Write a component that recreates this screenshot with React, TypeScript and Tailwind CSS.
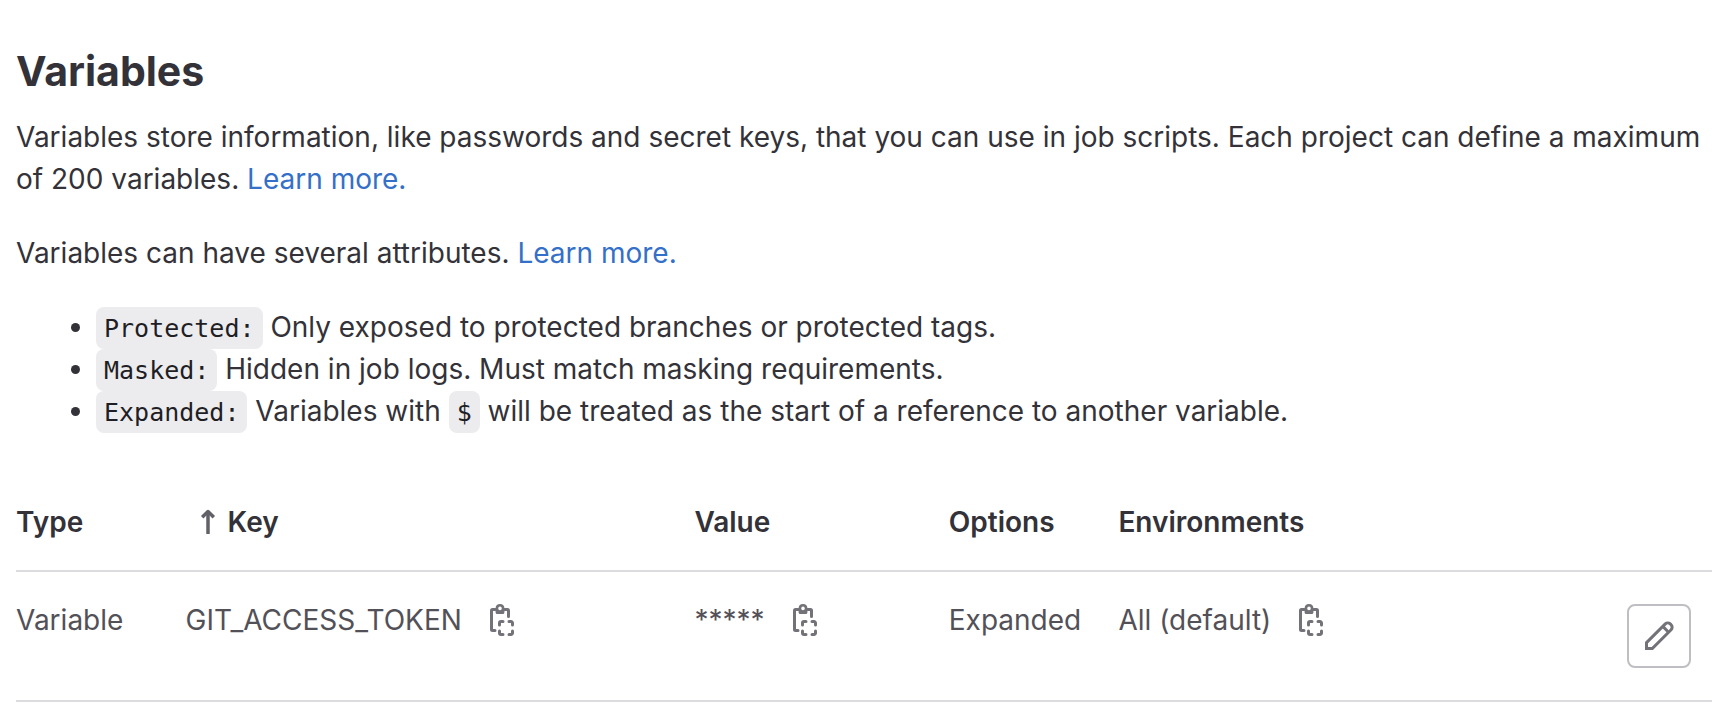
import type { ReactNode } from 'react';

function ClipboardIcon() {
  return (
    <svg viewBox="0 0 16 16" className="size-8 fill-none stroke-current" strokeWidth="1.5" strokeLinecap="round" aria-hidden="true">
      <path d="M4.5 13.25H3.25a.5.5 0 0 1-.5-.5V3.25a.5.5 0 0 1 .5-.5h1.5M9.25 2.75h1.5a.5.5 0 0 1 .5.5v3" />
      <path
        className="fill-current"
        stroke="none"
        fillRule="evenodd"
        d="M7 0a2.2 2.2 0 0 0-2.2 2v2.25c0 .41.34.75.75.75h2.9c.41 0 .75-.34.75-.75V2A2.2 2.2 0 0 0 7 0Zm0 1.3a.9.9 0 1 1 0 1.8.9.9 0 0 1 0-1.8Z"
      />
      <path d="M6.75 10.5v-1a.75.75 0 0 1 .75-.75h1M11.5 8.75h1a.75.75 0 0 1 .75.75v1M13.25 13.5v1a.75.75 0 0 1-.75.75h-1M8.5 15.25h-1a.75.75 0 0 1-.75-.75v-1" />
    </svg>
  );
}

function PencilIcon() {
  return (
    <svg viewBox="0 0 16 16" className="size-8 fill-none stroke-current" strokeWidth="1.5" aria-hidden="true">
      <path d="M1.75 14.25v-2.9l9.4-9.4a1.75 1.75 0 0 1 2.47 0l.43.43a1.75 1.75 0 0 1 0 2.47l-9.4 9.4Z" />
      <path d="m9.9 3.2 2.9 2.9" />
    </svg>
  );
}

function SortAscendingIcon() {
  return (
    <svg viewBox="0 0 16 42" className="h-[42px] w-4 fill-none stroke-current" strokeWidth="3.5" aria-hidden="true">
      <path d="M8 33V11" />
      <path d="m2.2 16.2 5.8-5.7 5.8 5.7" strokeLinejoin="round" />
    </svg>
  );
}

function Code({ children }: { children: ReactNode }) {
  return (
    <code className="rounded-lg bg-[#ececef] px-2 pt-[7px] pb-1.5 font-['DejaVu_Sans_Mono',monospace] text-[25px] leading-none text-[#1f1e24]">
      {children}
    </code>
  );
}

function LearnMore() {
  return (
    <a href="#learn-more" className="text-[#3470c8]">
      Learn more.
    </a>
  );
}

function Copyable({ label, children }: { label: string; children: ReactNode }) {
  return (
    <div className="flex items-start gap-6">
      <span>{children}</span>
      <button type="button" aria-label={label} className="text-[#737278]">
        <ClipboardIcon />
      </button>
    </div>
  );
}

export default function App() {
  return (
    <main className="bg-white pt-[45px] pr-2.5 pl-4 font-['Inter',sans-serif] text-[28px] leading-[42px] text-[#333238]">
      <h1 className="mb-[19px] text-[41px] leading-[52px] font-bold">Variables</h1>
      <p className="mb-8">
        Variables store information, like passwords and secret keys, that you can use in job scripts. Each project can
        define a maximum of 200 variables. <LearnMore />
      </p>
      <p className="mb-8">
        Variables can have several attributes. <LearnMore />
      </p>
      <ul className="mb-10 list-disc pl-20">
        <li>
          <Code>Protected:</Code> Only exposed to protected branches or protected tags.
        </li>
        <li>
          <Code>Masked:</Code> Hidden in job logs. Must match masking requirements.
        </li>
        <li>
          <Code>Expanded:</Code> Variables with <Code>$</Code> will be treated as the start of a reference to another
          variable.
        </li>
      </ul>
      <table className="w-full table-fixed text-left">
        <thead>
          <tr className="border-b-2 border-[#dcdcde] *:pt-[29px] *:pb-[27px] *:font-semibold">
            <th scope="col" className="w-[10%]">Type</th>
            <th scope="col" className="w-[30%]" aria-sort="ascending">
              <div className="flex gap-3 pl-3.5">
                <span className="text-[#626168]">
                  <SortAscendingIcon />
                </span>
                Key
              </div>
            </th>
            <th scope="col" className="w-[15%]">Value</th>
            <th scope="col" className="w-[10%]">Options</th>
            <th scope="col" className="w-[20%]">Environments</th>
            <th scope="col" className="w-[15%]" aria-label="Actions" />
          </tr>
        </thead>
        <tbody>
          <tr className="border-b-2 border-[#dcdcde] align-top leading-8 text-[#535158] *:py-8">
            <td>Variable</td>
            <td><Copyable label="Copy key">GIT_ACCESS_TOKEN</Copyable></td>
            <td><Copyable label="Copy value">*****</Copyable></td>
            <td>Expanded</td>
            <td><Copyable label="Copy environment">All (default)</Copyable></td>
            <td>
              <div className="flex justify-end pr-[21px]">
                <button
                  type="button"
                  aria-label="Edit"
                  className="flex size-16 items-center justify-center rounded-lg border-2 border-[#bfbfc3] bg-white text-[#737278]"
                >
                  <PencilIcon />
                </button>
              </div>
            </td>
          </tr>
        </tbody>
      </table>
    </main>
  );
}
